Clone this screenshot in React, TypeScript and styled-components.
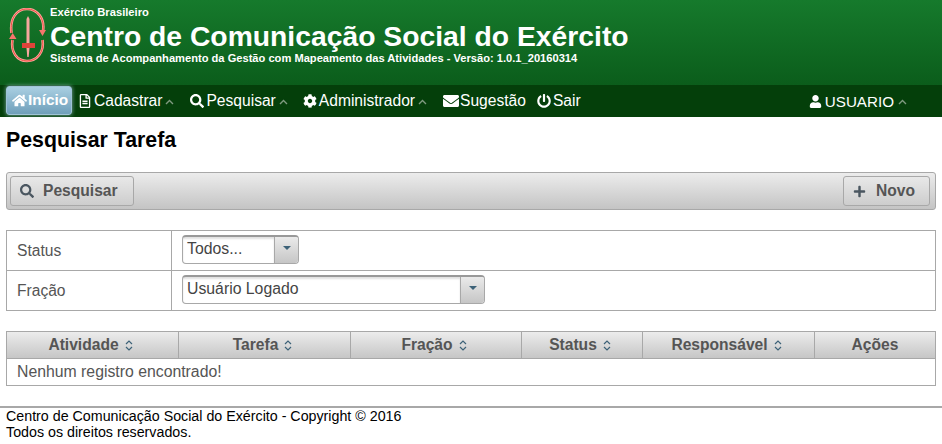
import styled, { createGlobalStyle } from "styled-components"
import { FaHome, FaRegFileAlt, FaSearch, FaCog, FaEnvelope, FaPowerOff, FaUser, FaPlus } from "react-icons/fa"

const GlobalStyle = createGlobalStyle`
    html, body {
        margin: 0;
        padding: 0;
        background: #fff;
        font-family: "Liberation Sans", Arial, sans-serif;
    }
`

const Page = styled.div`
    width: 942px;
    height: 444px;
    overflow: hidden;
`

const Header = styled.header`
    height: 85px;
    box-sizing: border-box;
    display: flex;
    padding: 8px 0 0 9px;
    gap: 4px;
    background: linear-gradient(to bottom, #167a2c 0%, #0b5d1b 100%);
`

const HeaderText = styled.div`
    color: #fff;
    display: flex;
    flex-direction: column;
    margin-top: -2px;
`

const Org = styled.div`
    font-size: 11.2px;
    font-weight: 700;
    line-height: 13px;
`

const AppTitle = styled.div`
    font-size: 28.3px;
    font-weight: 700;
    line-height: 32px;
    margin-top: 1px;
`

const Subtitle = styled.div`
    font-size: 11.13px;
    font-weight: 700;
    line-height: 13px;
`

const Nav = styled.nav`
    height: 32px;
    background: #043f0a;
    display: flex;
    align-items: center;
    padding-left: 6px;
    color: #fff;
    font-size: 15.6px;
`

const NavItem = styled.div<{ $right?: number; $gap?: number }>`
    display: flex;
    align-items: center;
    gap: ${({ $gap }) => $gap ?? 2}px;
    margin-right: ${({ $right }) => $right ?? 0}px;
    white-space: nowrap;
    svg.main {
        flex: none;
    }
`

const UserName = styled.span`
    font-size: 15.2px;
`

const HomeItem = styled.div`
    width: 66px;
    height: 29px;
    margin-right: 6px;
    box-sizing: border-box;
    border: 1px solid #9fc3d6;
    border-radius: 3px;
    background: linear-gradient(to bottom, #a9cfe2, #6f9fba);
    box-shadow: 0 0 4px rgba(180, 215, 235, 0.7);
    display: flex;
    align-items: center;
    gap: 1px;
    padding-left: 5px;
    color: #fff;
    font-weight: 700;
    font-size: 15.4px;
    position: relative;
    top: -1px;
`

const Caret = styled.svg`
    width: 9px;
    height: 6px;
    margin-left: 1px;
    margin-top: 2px;
    flex: none;
`

const NavSpacer = styled.div`
    flex: 1;
`

const Content = styled.main`
    padding: 0 6px;
`

const PageTitle = styled.h1`
    margin: 0;
    padding-top: 12px;
    font-size: 21.3px;
    line-height: 23px;
    font-weight: 700;
    color: #000;
`

const Toolbar = styled.div`
    margin-top: 20px;
    height: 38px;
    box-sizing: border-box;
    border: 1px solid #a8a8a8;
    border-radius: 3px;
    background: linear-gradient(to bottom, #ececec, #c4c4c4);
    display: flex;
    justify-content: space-between;
    align-items: center;
    padding: 0 5px 0 3px;
`

const ToolButton = styled.div<{ $width: number; $gap: number }>`
    width: ${({ $width }) => $width}px;
    height: 30px;
    box-sizing: border-box;
    border: 1px solid #a8a8a8;
    border-radius: 3px;
    background: linear-gradient(to bottom, #e8e8e8, #cdcdcd);
    display: flex;
    align-items: center;
    gap: ${({ $gap }) => $gap}px;
    padding-left: 9px;
    color: #555;
    font-size: 15.6px;
    font-weight: 700;
    svg {
        color: #4a5660;
    }
`

const FormTable = styled.div`
    margin-top: 20px;
    border: 1px solid #a8a8a8;
    border-bottom: none;
    display: grid;
    grid-template-columns: 165px 1fr;
    color: #555;
    font-size: 15.6px;
`

const FormLabel = styled.div`
    height: 40px;
    box-sizing: border-box;
    border-right: 1px solid #a8a8a8;
    border-bottom: 1px solid #a8a8a8;
    display: flex;
    align-items: center;
    padding-left: 10px;
`

const FormField = styled.div`
    height: 40px;
    box-sizing: border-box;
    border-bottom: 1px solid #a8a8a8;
    display: flex;
    align-items: flex-start;
    padding: 4px 0 0 10px;
`

const Select = styled.div<{ $width: number }>`
    width: ${({ $width }) => $width}px;
    height: 29px;
    box-sizing: border-box;
    border: 1px solid #a8a8a8;
    border-top: 2px solid #999;
    border-radius: 4px;
    background: #fff;
    display: flex;
    overflow: hidden;
`

const SelectLabel = styled.div`
    flex: 1;
    padding-left: 4px;
    font-size: 15.8px;
    line-height: 23px;
    color: #444;
    box-shadow: inset 0 2px 2px rgba(0, 0, 0, 0.12);
`

const SelectArrow = styled.div`
    width: 24px;
    border-left: 1px solid #a8a8a8;
    background: linear-gradient(to bottom, #eaeaea, #c6c6c6);
    display: flex;
    align-items: center;
    justify-content: center;
    padding-bottom: 5px;
    box-sizing: border-box;
`

const DataTable = styled.div`
    margin-top: 20px;
    border: 1px solid #a8a8a8;
`

const HeadRow = styled.div`
    display: grid;
    grid-template-columns: 172px 172px 171px 121px 172px 1fr;
    height: 26px;
    border-bottom: 1px solid #a8a8a8;
    background: linear-gradient(to bottom, #ececec, #c6c6c6);
`

const HeadCell = styled.div`
    display: flex;
    align-items: center;
    justify-content: center;
    gap: 6px;
    color: #555;
    font-size: 15.6px;
    font-weight: 700;
    border-right: 1px solid #a8a8a8;
    &:last-child {
        border-right: none;
    }
`

const SortGlyph = styled.svg`
    width: 8px;
    height: 11px;
    margin-right: 4px;
    flex: none;
`

const EmptyRow = styled.div`
    height: 26px;
    padding-left: 10px;
    display: flex;
    align-items: center;
    color: #555;
    font-size: 15.8px;
`

const Footer = styled.footer`
    margin-top: 20px;
    border-top: 2px solid #a8a8a8;
    color: #000;
    font-size: 14.25px;
    line-height: 16px;
    padding-left: 6px;
`

function MenuCaret() {
    return (
        <Caret viewBox="0 0 9 6">
            <path d="M1 5 L4.5 1.5 L8 5" fill="none" stroke="#7f9a80" strokeWidth="1.4" />
        </Caret>
    )
}

function SortIcon() {
    return (
        <SortGlyph viewBox="0 0 8 11">
            <path d="M1 4 L4 1 L7 4 M1 7 L4 10 L7 7" fill="none" stroke="#3d6278" strokeWidth="1.2" />
        </SortGlyph>
    )
}

function DownArrow() {
    return (
        <svg width="8" height="4" viewBox="0 0 8 4">
            <path d="M0 0 H8 L4 4 Z" fill="#3d6278" />
        </svg>
    )
}

const arcTop = "M2.5 25 C0.5 10 8 1 18 1 C28 1 36 10 34 23"
const arcBottom = "M3.5 32 C1.5 44 8 53 18 53 C28 53 35.5 44 33.5 32"

function Logo() {
    return (
        <svg width="37" height="55" viewBox="0 0 37 55" style={{ flex: "none" }}>
            <g fill="none" stroke="#ffa79d" strokeWidth="2.6">
                <path d={arcTop} />
                <path d={arcBottom} />
            </g>
            <g fill="none" stroke="#ee4f44" strokeWidth="1">
                <path d={arcTop} />
                <path d={arcBottom} />
            </g>
            <path d="M30 22 H37 L33.5 28 Z M0 31 H7.5 L3.7 25 Z" fill="#f4766c" />
            <path d="M17.5 11 L19 8 L20.5 11 V35 H17.5 Z" fill="#f7a79e" />
            <rect x="13" y="35" width="13" height="5" fill="#e0443a" />
            <path d="M17.5 40 H20.5 L19.7 49 H18.3 Z" fill="#f7a79e" />
        </svg>
    )
}

export default function App() {
    return (
        <Page>
            <GlobalStyle />
            <Header>
                <Logo />
                <HeaderText>
                    <Org>Exército Brasileiro</Org>
                    <AppTitle>Centro de Comunicação Social do Exército</AppTitle>
                    <Subtitle>Sistema de Acompanhamento da Gestão com Mapeamento das Atividades - Versão: 1.0.1_20160314</Subtitle>
                </HeaderText>
            </Header>
            <Nav>
                <HomeItem><FaHome size={15} />Início</HomeItem>
                <NavItem $right={16}><FaRegFileAlt className="main" size={14} />Cadastrar<MenuCaret /></NavItem>
                <NavItem $right={15}><FaSearch className="main" size={14} />Pesquisar<MenuCaret /></NavItem>
                <NavItem $right={16}><FaCog className="main" size={14} />Administrador<MenuCaret /></NavItem>
                <NavItem $right={11}><FaEnvelope className="main" size={16} style={{ marginRight: -1 }} />Sugestão</NavItem>
                <NavItem><FaPowerOff className="main" size={14} />Sair</NavItem>
                <NavSpacer />
                <NavItem $right={35} $gap={3}><FaUser className="main" size={13} /><UserName>USUARIO</UserName><MenuCaret /></NavItem>
            </Nav>
            <Content>
                <PageTitle>Pesquisar Tarefa</PageTitle>
                <Toolbar>
                    <ToolButton $width={124} $gap={9}><FaSearch size={14} />Pesquisar</ToolButton>
                    <ToolButton $width={87} $gap={10}><FaPlus size={13} />Novo</ToolButton>
                </Toolbar>
                <FormTable>
                    <FormLabel>Status</FormLabel>
                    <FormField>
                        <Select $width={117}>
                            <SelectLabel>Todos...</SelectLabel>
                            <SelectArrow><DownArrow /></SelectArrow>
                        </Select>
                    </FormField>
                    <FormLabel>Fração</FormLabel>
                    <FormField>
                        <Select $width={303}>
                            <SelectLabel>Usuário Logado</SelectLabel>
                            <SelectArrow><DownArrow /></SelectArrow>
                        </Select>
                    </FormField>
                </FormTable>
                <DataTable>
                    <HeadRow>
                        <HeadCell>Atividade <SortIcon /></HeadCell>
                        <HeadCell>Tarefa <SortIcon /></HeadCell>
                        <HeadCell>Fração <SortIcon /></HeadCell>
                        <HeadCell>Status <SortIcon /></HeadCell>
                        <HeadCell>Responsável <SortIcon /></HeadCell>
                        <HeadCell>Ações</HeadCell>
                    </HeadRow>
                    <EmptyRow>Nenhum registro encontrado!</EmptyRow>
                </DataTable>
            </Content>
            <Footer>
                Centro de Comunicação Social do Exército - Copyright © 2016<br />
                Todos os direitos reservados.
            </Footer>
        </Page>
    )
}
